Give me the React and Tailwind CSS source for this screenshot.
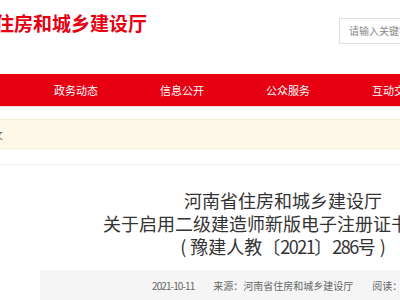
import React from 'react';

const navItems = ['政务动态', '信息公开', '公众服务', '互动交流', '专题专栏'];

const App = () => {
  return (
    <div className="w-[400px] h-[300px] overflow-hidden bg-white font-['Noto_Sans_CJK_SC','Liberation_Sans',sans-serif]">
      <div className="w-[566px]">
        {/* Header */}
        <div className="flex h-[74px]">
          <div className="w-[339px] pt-[13px]">
            <div className="w-[300px] ml-[-153px] text-right whitespace-nowrap text-[19px] leading-[20px] font-bold text-[#e60012]">
              河南省住房和城乡建设厅
            </div>
          </div>
          <div className="mt-[18px] h-[26px] w-[200px] border border-[#dddddd] pl-[9px] text-[10px] leading-[24px] text-[#888]">
            请输入关键字
          </div>
        </div>

        {/* Nav */}
        <div className="flex h-[32px] items-center bg-[#e60012] pl-[23px] border-b border-[#f6d6d9] box-content">
          {navItems.map((item) => (
            <div key={item} className="w-[106px] shrink-0 text-center text-[11px] text-white whitespace-nowrap">
              {item}
            </div>
          ))}
        </div>

        {/* Breadcrumb */}
        <div className="mt-[12px] flex h-[30px] items-center border-y border-[#f6ecd0] bg-[#fdf8e8]">
          <div className="w-[300px] ml-[-297px] text-right whitespace-nowrap text-[10px] text-[#666]">
            当前位置：首页 &gt; 政务动态 &gt; 正文
          </div>
        </div>

        <div className="mt-[15px] border-t border-[#eeeeee]" />

        {/* Title */}
        <div className="mt-[24px] text-center text-[18px] leading-[23px] text-[#333] whitespace-nowrap">
          <div>河南省住房和城乡建设厅</div>
          <div>关于启用二级建造师新版电子注册证书的通知</div>
          <div>
            ( 豫建人教〔<span className="tracking-[-1.5px]">2021</span>〕<span className="tracking-[-1.5px]">286</span>号 )
          </div>
        </div>

        {/* Info */}
        <div className="mt-[12px] ml-[40px] flex h-[30px] items-center gap-[19px] bg-[#f5f5f5] pl-[112px] text-[10px] text-[#666] whitespace-nowrap">
          <span className="tracking-[-0.9px]">2021-10-11</span>
          <span>来源：河南省住房和城乡建设厅</span>
          <span>阅读：1256</span>
        </div>
      </div>
    </div>
  );
};

export default App;
